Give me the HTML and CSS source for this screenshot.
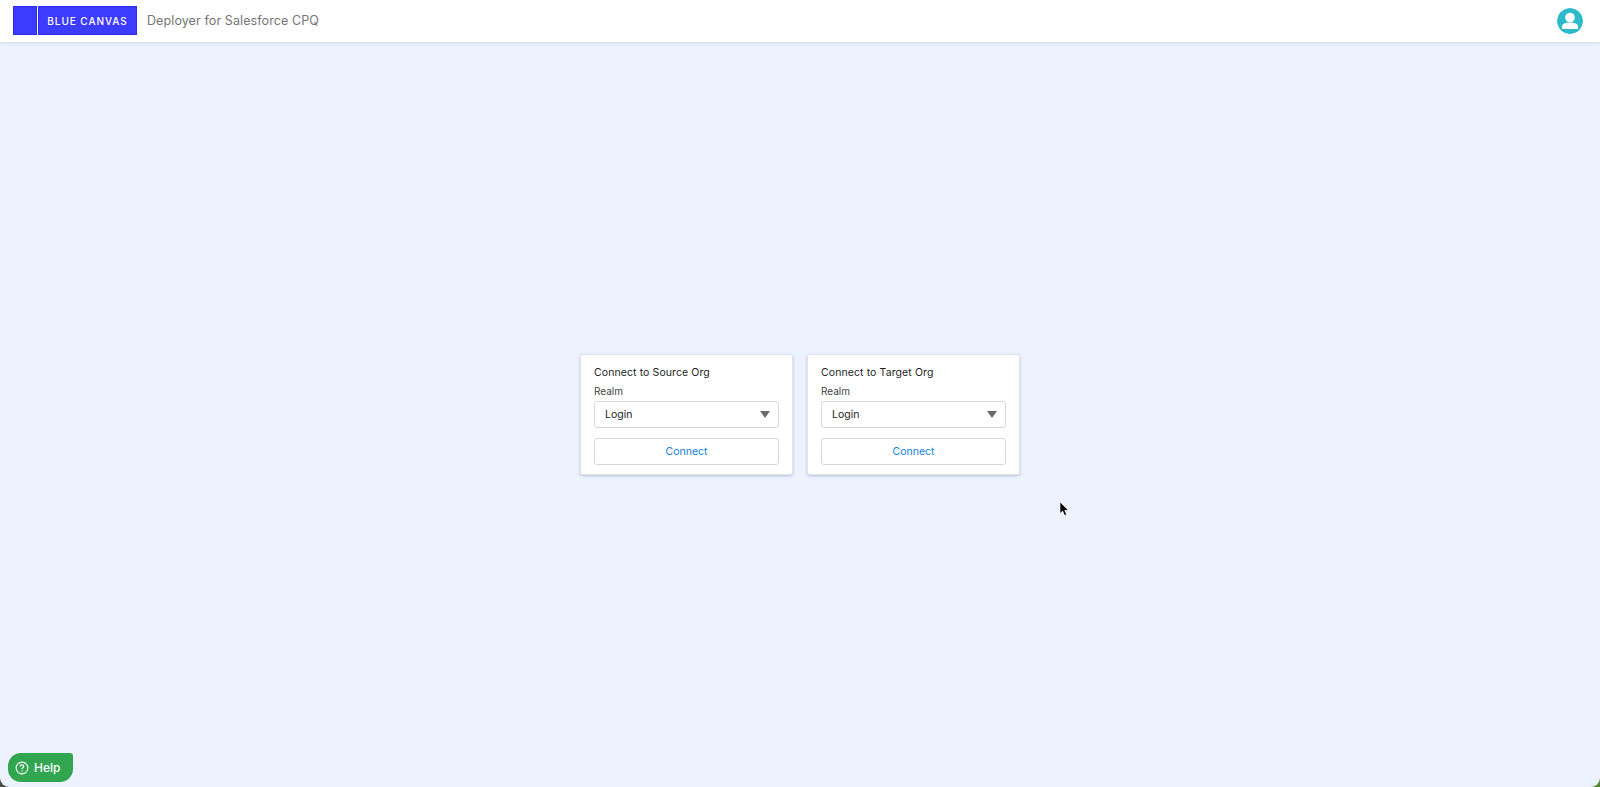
FILE: index.html
```html
<!DOCTYPE html>
<html lang="en">

<head>
    <meta charset="UTF-8">
    <title>Blue Canvas - Deployer for Salesforce CPQ</title>
    <link rel="stylesheet" href="styles.css">
</head>

<body>
    <div class="app">
        <header class="topbar">
            <div class="logo">
                <div class="logo-square"></div>
                <div class="logo-name">BLUE CANVAS</div>
            </div>
            <div class="product">Deployer for Salesforce CPQ</div>
            <svg class="avatar" viewBox="0 0 26 26">
                <circle cx="13" cy="13" r="13" fill="#2bbbcb" />
                <circle cx="13" cy="9.500" r="4.800" fill="#fff" />
                <path d="M5 18.500c0-2.700 3.400-4 8-4s8 1.300 8 4v2.500h-16z" fill="#fff" />
            </svg>
        </header>

        <main class="content">
            <section class="card">
                <h2 class="card-title">Connect to Source Org</h2>
                <div class="field-label">Realm</div>
                <div class="select">
                    <span>Login</span>
                    <div class="select-arrow"></div>
                </div>
                <button class="connect">Connect</button>
            </section>
            <section class="card">
                <h2 class="card-title">Connect to Target Org</h2>
                <div class="field-label">Realm</div>
                <div class="select">
                    <span>Login</span>
                    <div class="select-arrow"></div>
                </div>
                <button class="connect">Connect</button>
            </section>
        </main>

        <svg class="pointer" viewBox="0 0 10 16">
            <path d="M1 1v11.500l2.700-2.500 1.900 4.500 2-0.900-1.900-4.300h3.600z" fill="#000" stroke="#fff" stroke-width="0.6" />
        </svg>

        <div class="help">
            <svg class="help-icon" viewBox="0 0 16 16">
                <circle cx="8" cy="8" r="6.700" fill="none" stroke="#fff" stroke-width="1.300" />
                <path d="M6 6.400c0-1.200 1-1.900 2-1.900s2 0.700 2 1.800c0 1.500-2 1.500-2 3" fill="none" stroke="#fff" stroke-width="1.300" />
                <circle cx="8" cy="11.400" r="0.800" fill="#fff" />
            </svg>
            <span>Help</span>
        </div>
    </div>
</body>

</html>
```

FILE: styles.css
```css
html,
body {
    height: 100%;
}

body {
    margin: 0;
    overflow: hidden;
    background: linear-gradient(90deg, #4b4a44 50%, #4c8a2c 50%);
    font-family: Inter, "Noto Sans", sans-serif;
}

.app {
    position: relative;
    display: flex;
    flex-direction: column;
    height: 100%;
    background-color: #ecf3ff;
    border-radius: 0 0 9px 9px;
    overflow: hidden;
}

.topbar {
    display: flex;
    align-items: center;
    flex-shrink: 0;
    height: 41.500px;
    padding: 0 17px 0 13px;
    background-color: #fff;
    box-shadow: 0 1px 4px rgba(40, 50, 90, 0.14);
}

.logo {
    display: flex;
    gap: 1px;
    height: 29px;
}

.logo-square {
    box-sizing: border-box;
    width: 24px;
    background-color: #3d3bff;
    border: 1px solid #2f2cf2;
}

.logo-name {
    display: flex;
    align-items: center;
    justify-content: center;
    box-sizing: border-box;
    width: 99px;
    background-color: #3d3bff;
    border: 1px solid #2f2cf2;
    color: #fff;
    font-size: 10px;
    font-weight: 500;
    letter-spacing: 0.95px;
}

.product {
    margin-left: 10px;
    color: #757575;
    font-size: 12.500px;
    letter-spacing: 0.1px;
}

.avatar {
    width: 26px;
    height: 26px;
    margin-left: auto;
    border-radius: 50%;
}

.content {
    flex: 1;
    display: flex;
    align-items: center;
    justify-content: center;
    gap: 14px;
}

.card {
    display: flex;
    flex-direction: column;
    box-sizing: border-box;
    width: 213px;
    height: 121px;
    padding: 11px 13px 0;
    background-color: #fff;
    border: 1px solid #e1e3e8;
    border-radius: 3px;
    box-shadow: 0 1px 3px rgba(40, 50, 90, 0.25);
}

.card-title {
    margin: 0;
    color: #222;
    font-size: 10.500px;
    font-weight: 400;
    line-height: 14px;
    letter-spacing: 0.1px;
}

.field-label {
    margin-top: 5px;
    color: #444;
    font-size: 10px;
    line-height: 12px;
}

.select {
    display: flex;
    align-items: center;
    justify-content: space-between;
    box-sizing: border-box;
    height: 27px;
    margin-top: 4px;
    padding: 0 8px 0 10px;
    border: 1px solid #d8d8d8;
    border-radius: 3px;
    color: #222;
    font-size: 10.500px;
}

.select-arrow {
    width: 0;
    height: 0;
    border-left: 5.500px solid transparent;
    border-right: 5.500px solid transparent;
    border-top: 7px solid #6b6b6b;
}

.connect {
    height: 27px;
    margin-top: 10px;
    padding: 0;
    background-color: #fff;
    border: 1px solid #d8d8d8;
    border-radius: 3px;
    color: #0f7fdc;
    font-family: inherit;
    font-size: 10.500px;
}

.pointer {
    position: absolute;
    left: 1059px;
    top: 501px;
    width: 10px;
    height: 16px;
}

.help {
    position: absolute;
    left: 8px;
    bottom: 5px;
    display: flex;
    align-items: center;
    gap: 5px;
    box-sizing: border-box;
    width: 65px;
    height: 29px;
    padding-left: 7px;
    background-color: #31a54f;
    border-radius: 13px 3px 13px 13px;
    color: #fff;
    font-size: 12px;
    font-weight: 500;
}

.help-icon {
    width: 14px;
    height: 14px;
}
```
